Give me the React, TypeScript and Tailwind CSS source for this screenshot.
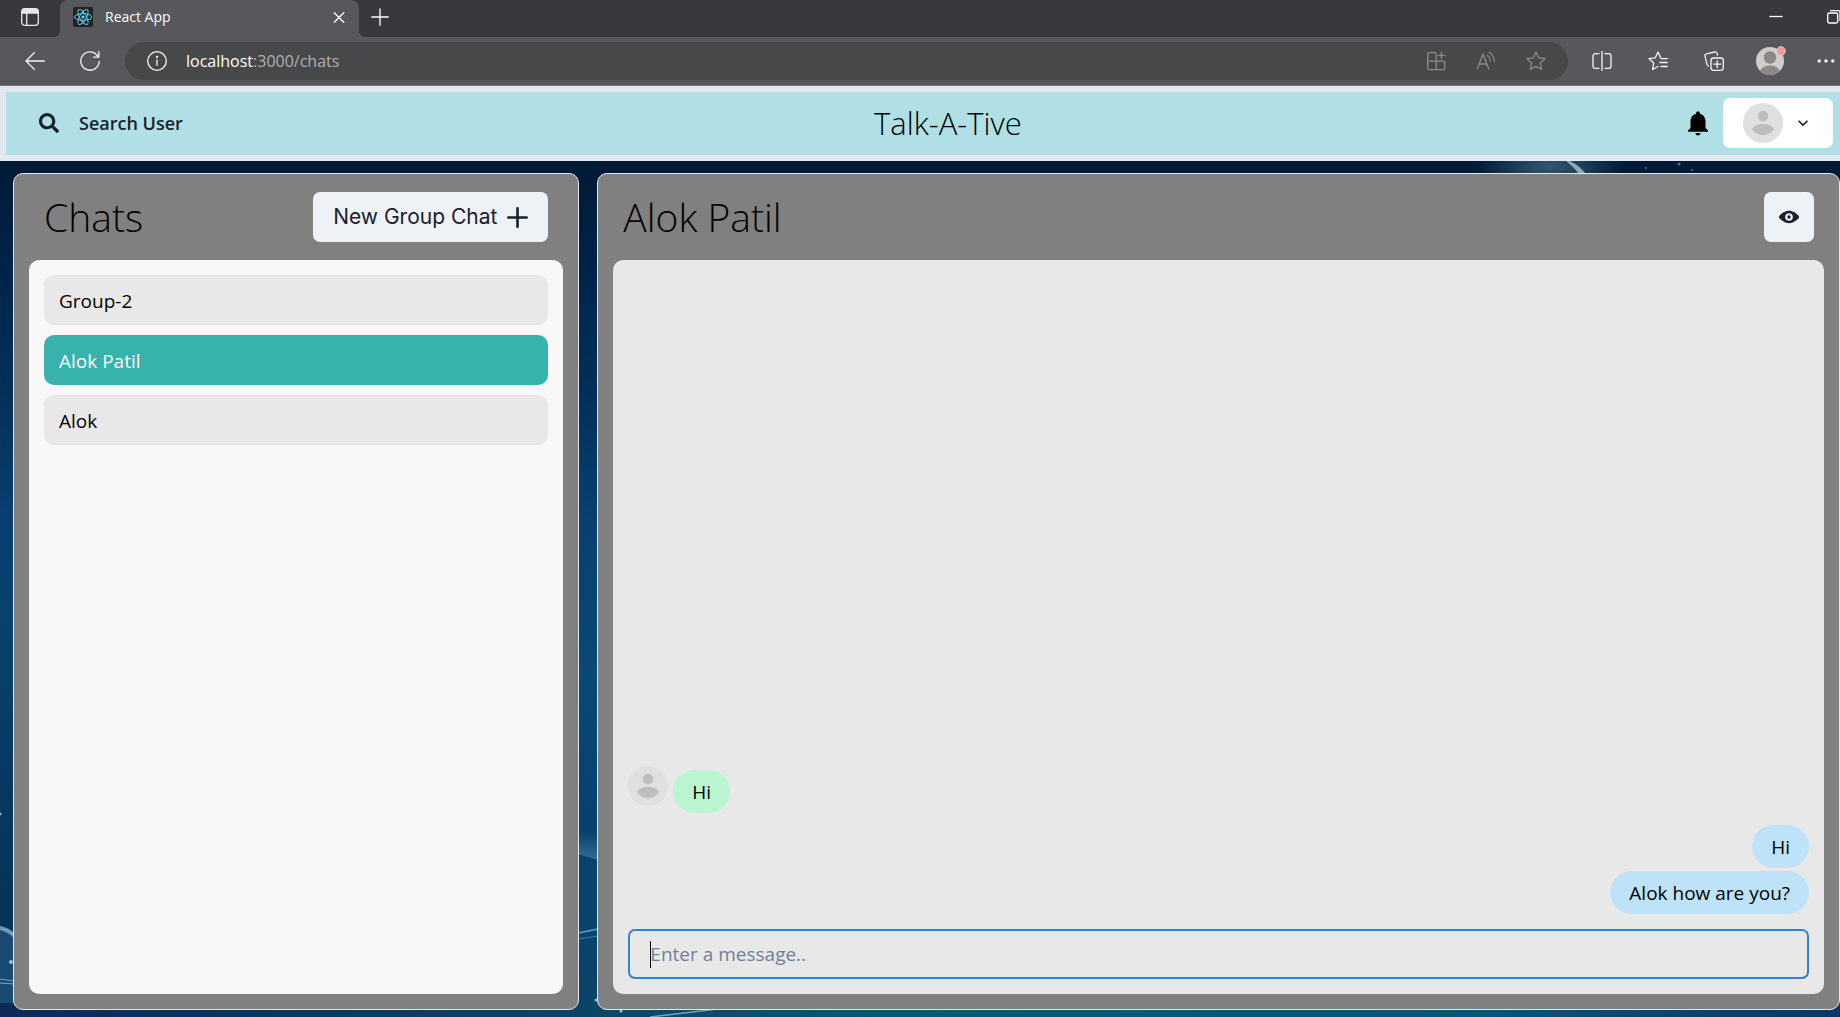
import React from 'react';
import { FaSearch } from 'react-icons/fa';

type Props = { children: React.ReactNode; className?: string; box?: string };

function LineIcon({ children, className = 'size-5', box = '0 0 20 20' }: Props) {
  return (
    <svg
      className={`shrink-0 ${className}`}
      viewBox={box}
      fill="none"
      stroke="currentColor"
      strokeWidth="1.3"
      strokeLinecap="round"
      strokeLinejoin="round"
      aria-hidden="true"
    >
      {children}
    </svg>
  );
}

function Avatar() {
  return (
    <svg className="size-10 shrink-0" viewBox="0 0 40 40" role="img" aria-label="User avatar">
      <circle cx="20" cy="20" r="20" fill="#e0e0e0" />
      <circle cx="20" cy="13" r="5.2" fill="#bdbdbd" />
      <path d="M9 26.3C10.5 22.6 15 21 20 21s9.500 1.600 11 5.300C28.500 30 24.500 32.200 20 32.200S11.500 30 9 26.300z" fill="#bdbdbd" />
    </svg>
  );
}

function ReactLogo() {
  return (
    <svg className="size-5 shrink-0" viewBox="0 0 20 20" aria-hidden="true">
      <rect width="20" height="20" rx="2" fill="#222" />
      <g fill="none" stroke="#61dafb" strokeWidth="0.9">
        <ellipse cx="10" cy="10" rx="8.6" ry="3.3" />
        <ellipse cx="10" cy="10" rx="8.6" ry="3.3" transform="rotate(60 10 10)" />
        <ellipse cx="10" cy="10" rx="8.6" ry="3.3" transform="rotate(120 10 10)" />
      </g>
      <circle cx="10" cy="10" r="1.6" fill="#61dafb" />
    </svg>
  );
}

function TabStrip() {
  return (
    <div className="flex h-[37px] items-stretch overflow-hidden bg-[#38393c] text-white">
      <button aria-label="Tab actions" className="flex w-[60px] shrink-0 items-center pb-[3px] pl-[21px]">
        <LineIcon className="size-[18px] text-gray-200" box="0 0 18 18">
          <rect x="0.7" y="0.7" width="16.6" height="16.6" rx="3" />
          <path d="M1 3.500a2.500 2.500 0 0 1 2.500-2.500h11a2.500 2.500 0 0 1 2.500 2.500V5H1z" fill="currentColor" />
          <path d="M5.700 5v12" />
        </LineIcon>
      </button>
      <div className="relative flex w-[299px] shrink-0 items-center gap-3 rounded-t-lg bg-[#57585c] pr-[14px] pb-[3px] pl-[13px] before:absolute before:bottom-0 before:-left-1.5 before:size-1.5 before:bg-[radial-gradient(circle_at_0_0,transparent_6px,#57585c_6px)] after:absolute after:-right-1.5 after:bottom-0 after:size-1.5 after:bg-[radial-gradient(circle_at_100%_0,transparent_6px,#57585c_6px)]">
        <ReactLogo />
        <span className="flex-1 text-[14px] leading-5">React App</span>
        <button aria-label="Close tab">
          <LineIcon className="size-3" box="0 0 12 12">
            <path d="M1.300 1.800l9.400 9.400M10.700 1.800l-9.400 9.400" />
          </LineIcon>
        </button>
      </div>
      <button aria-label="New tab" className="ml-3 pb-1">
        <LineIcon className="size-[18px]" box="0 0 18 18">
          <path d="M9 .8v16.400M.8 9h16.400" />
        </LineIcon>
      </button>
      <div className="ml-auto flex w-[71px] shrink-0 items-center justify-between pb-1">
        <button aria-label="Minimize">
          <LineIcon className="size-[14px]" box="0 0 14 14">
            <path d="M.5 6.500h13" strokeLinecap="butt" />
          </LineIcon>
        </button>
        <button aria-label="Restore" className="w-[13px] overflow-hidden">
          <LineIcon className="size-[14px]" box="0 0 14 14">
            <rect x="0.700" y="3" width="10" height="10" rx="1.500" />
            <path d="M3.500 .700h7.500a2 2 0 0 1 2 2v8" />
          </LineIcon>
        </button>
      </div>
    </div>
  );
}

function ToolButton({ label, children }: { label: string; children: React.ReactNode }) {
  return (
    <button aria-label={label} className="flex h-[38px] w-14 shrink-0 items-center justify-center">
      {children}
    </button>
  );
}

function Toolbar() {
  return (
    <div className="flex h-[49px] items-center border-b border-[#75767c] bg-[#57585c] text-gray-100">
      <div className="flex w-[125px] shrink-0 items-center gap-[35px] pl-[25px]">
        <button aria-label="Back">
          <LineIcon>
            <path d="M19.300 10H1M9.500 1.500L1 10l8.500 8.500" />
          </LineIcon>
        </button>
        <button aria-label="Reload">
          <LineIcon>
            <path d="M19.200 10.500a9.200 9.200 0 1 1-2.200-6.500l1.800 2M18.900 .8v5.300h-5.300" />
          </LineIcon>
        </button>
      </div>
      <div className="flex h-[38px] flex-1 items-center rounded-full bg-[#474849] pr-[22px] pl-[22px]">
        <LineIcon>
          <circle cx="10" cy="10" r="9.300" />
          <path d="M10 8.800v5.400" />
          <circle cx="10" cy="6" r="0.500" fill="currentColor" />
        </LineIcon>
        <span className="ml-[19px] flex-1 text-[16px] leading-6 text-[#b0b0b2]">
          <span className="text-white">localhost</span>:3000/chats
        </span>
        <div className="flex items-center gap-[30px] text-[#8b8c8e]">
          <button aria-label="Apps available">
            <LineIcon>
              <path d="M10.200 10.200V3.200a1.500 1.500 0 0 0-1.500-1.500H3.200a1.500 1.500 0 0 0-1.500 1.500v14a1.500 1.500 0 0 0 1.500 1.500h14a1.500 1.500 0 0 0 1.500-1.500v-5.500a1.500 1.500 0 0 0-1.500-1.500H1.700M10.200 10.200v8.500M15.500 1.200v6.400M12.300 4.400h6.400" />
            </LineIcon>
          </button>
          <button aria-label="Read aloud">
            <LineIcon>
              <path d="M1.300 18L7 3l5.700 15M3.300 13h7.500M11.500 4.500c1.800 1.300 2.700 3 2.800 5.300M13.200 1.200c3.300 2.200 5 5 5.200 9" />
            </LineIcon>
          </button>
          <button aria-label="Add to favorites">
            <LineIcon>
              <path d="M10 1l2.700 5.800 6.300.8-4.600 4.400 1.200 6.500L10 15.400l-5.600 3.100L5.600 12 1 7.600l6.300-.8z" />
            </LineIcon>
          </button>
        </div>
      </div>
      <div className="flex w-[272px] shrink-0 overflow-hidden pl-1.5">
        <ToolButton label="Split screen">
          <LineIcon>
            <path d="M10 .500v19M7 2.700H3.200A2.200 2.200 0 0 0 1 4.900v10.200a2.200 2.200 0 0 0 2.200 2.200H7M13 2.700h3.800A2.200 2.200 0 0 1 19 4.900v10.200a2.200 2.200 0 0 1-2.200 2.200H13" />
          </LineIcon>
        </ToolButton>
        <ToolButton label="Favorites">
          <LineIcon>
            <path d="M10 15.500l-5.500 3L5.700 12 .9 7.600l6.400-.8L10 1l2.700 5.800M13 7.600h6.300M12 11.500h7.300M13 15.500h6.300" />
          </LineIcon>
        </ToolButton>
        <ToolButton label="Collections">
          <LineIcon>
            <rect x="7" y="7" width="12.300" height="12.300" rx="2.500" />
            <path d="M13.200 9.800v6.800M9.800 13.200h6.800M13.500 4l-.3-1.200A2 2 0 0 0 10.700 1L2.500 2.800A2 2 0 0 0 1 5.200l2 8.200c.2.900.8 1.500 1.500 1.700" />
          </LineIcon>
        </ToolButton>
        <ToolButton label="Profile">
          <svg className="size-8" viewBox="0 0 32 32" aria-hidden="true">
            <clipPath id="profile-clip">
              <circle cx="16" cy="16" r="14" />
            </clipPath>
            <circle cx="16" cy="16" r="14" fill="#cfcdca" />
            <g fill="#8b8784" clipPath="url(#profile-clip)">
              <circle cx="16" cy="12.500" r="6.200" />
              <ellipse cx="16" cy="28" rx="10.500" ry="7.500" />
            </g>
            <circle cx="27" cy="6" r="4.400" fill="#fa9a94" stroke="#d9d3d2" strokeWidth="0.800" />
          </svg>
        </ToolButton>
        <ToolButton label="Settings and more">
          <LineIcon>
            <g fill="currentColor" stroke="none">
              <circle cx="3.200" cy="10" r="1.700" />
              <circle cx="10" cy="10" r="1.700" />
              <circle cx="16.800" cy="10" r="1.700" />
            </g>
          </LineIcon>
        </ToolButton>
      </div>
    </div>
  );
}

function Header() {
  return (
    <header className="flex shrink-0 items-center justify-between border-y-6 border-l-6 border-[#e2e8f0] bg-[#b0e0e6] pt-1.5 pr-[7px] pb-[7px] pl-[13px]">
      <button className="flex h-[50px] items-center gap-5 px-5 text-[18px] font-semibold text-[#1a202c]">
        <FaSearch className="size-5" />
        <span className="pr-5">Search User</span>
      </button>
      <h1 className="text-[31px] leading-[50px] font-light">Talk-A-Tive</h1>
      <div className="flex items-center gap-2.5 pl-2.5">
        <button aria-label="Notifications">
          <svg className="size-[30px]" viewBox="0 0 24 24" fill="#000" aria-hidden="true">
            <path d="M12 22c1.100 0 2-.9 2-2h-4c0 1.100.89 2 2 2zm6-6v-5c0-3.070-1.640-5.640-4.500-6.320V4c0-.83-.67-1.500-1.500-1.500s-1.500.67-1.500 1.500v.68C7.630 5.360 6 7.920 6 11v5l-2 2v1h16v-1l-2-2z" />
          </svg>
        </button>
        <button aria-label="Account menu" className="flex h-[50px] items-center gap-2.5 rounded-[7px] bg-white px-5 text-[#1a202c]">
          <Avatar />
          <svg className="size-5" viewBox="0 0 24 24" fill="currentColor" aria-hidden="true">
            <path d="M16.590 8.590L12 13.170 7.410 8.590 6 10l6 6 6-6z" />
          </svg>
        </button>
      </div>
    </header>
  );
}

function SpaceBackdrop() {
  return (
    <svg className="absolute inset-0 size-full" viewBox="0 0 1840 856" preserveAspectRatio="none" aria-hidden="true">
      <defs>
        <linearGradient id="sky" x1="0" y1="0" x2="0" y2="1">
          <stop offset="0" stopColor="#001a35" />
          <stop offset="0.120" stopColor="#002347" />
          <stop offset="0.280" stopColor="#03315a" />
          <stop offset="0.420" stopColor="#084070" />
          <stop offset="0.600" stopColor="#094a74" />
          <stop offset="0.760" stopColor="#07426f" />
          <stop offset="1" stopColor="#0a4566" />
        </linearGradient>
        <linearGradient id="edge" x1="0" y1="0" x2="0" y2="1">
          <stop offset="0" stopColor="#04335f" stopOpacity="0" />
          <stop offset="1" stopColor="#063354" />
        </linearGradient>
        <linearGradient id="floor" x1="0" y1="0" x2="1" y2="0">
          <stop offset="0" stopColor="#0c2a55" />
          <stop offset="0.320" stopColor="#0a4565" />
          <stop offset="0.520" stopColor="#0b5a72" />
          <stop offset="0.800" stopColor="#0a5575" />
          <stop offset="1" stopColor="#073766" />
        </linearGradient>
        <linearGradient id="haze" x1="0" y1="0" x2="0" y2="1">
          <stop offset="0" stopColor="#5b93b5" stopOpacity="0" />
          <stop offset="1" stopColor="#5b93b5" stopOpacity="0.550" />
        </linearGradient>
        <radialGradient id="glow">
          <stop offset="0" stopColor="#4d7894" stopOpacity="0.650" />
          <stop offset="1" stopColor="#4d7894" stopOpacity="0" />
        </radialGradient>
      </defs>
      <rect width="1840" height="856" fill="url(#sky)" />
      <rect y="350" width="14" height="420" fill="url(#edge)" />
      <rect y="842" width="1840" height="14" fill="url(#floor)" />
      <ellipse cx="1550" cy="6" rx="75" ry="30" fill="url(#glow)" />
      <path d="M1570 0q10 5 16 13h-7q-5-7-13-13z" fill="#8ba8ba" />
      <g fill="#4a7194">
        <circle cx="1646" cy="7" r="1" />
        <circle cx="1679" cy="3" r="1.500" />
        <circle cx="1692" cy="9" r="1" />
      </g>
      <path d="M0 765q9 1 14 6v71H0z" fill="#1b4a70" />
      <path d="M0 765q9 2 14 7v5q-6-6-14-8z" fill="#6f9cba" />
      <path d="M0 818l14 2M0 822l14 1" stroke="#7ba4c2" />
      <circle cx="11" cy="801" r="2" fill="#8fbcd6" />
      <circle cx="0" cy="653" r="1.500" fill="#8fbcd6" />
      <path d="M578 672h20v27l-20-6z" fill="url(#haze)" />
      <path d="M578 772l20-4" stroke="#5ba0c8" strokeWidth="1.500" />
      <path d="M578 778l20-3" stroke="#3d80a8" />
      <circle cx="596" cy="839" r="1.500" fill="#7fc4d4" />
      <circle cx="621" cy="850" r="1.500" fill="#8edcea" />
      <path d="M650 856q35-4 75-9" fill="none" stroke="#6ba5bd" strokeWidth="1.500" />
    </svg>
  );
}

const chats = ['Group-2', 'Alok Patil', 'Alok'];
const selectedChat = 'Alok Patil';

function ChatList() {
  return (
    <aside className="flex w-[31%] shrink-0 flex-col rounded-[10px] border border-[#e2e8f0] bg-[#808080] p-[15px]">
      <div className="mb-[15px] flex h-14 items-center justify-between px-[15px]">
        <h2 className="text-[39px] leading-[56px] font-light">Chats</h2>
        <button className="flex h-[50px] items-center gap-2.5 rounded-[7px] bg-[#edf2f7] px-5 text-[#1a202c]">
          <span className="font-['Inter'] text-[21px] leading-6">New Group Chat</span>
          <svg className="size-[21px]" viewBox="0 0 24 24" stroke="currentColor" strokeWidth="3" strokeLinecap="round" aria-hidden="true">
            <path d="M12 1.500v21M1.500 12h21" />
          </svg>
        </button>
      </div>
      <ul className="flex flex-1 flex-col gap-2.5 rounded-[10px] bg-[#f8f8f8] p-[15px]">
        {chats.map((name) => (
          <li key={name}>
            <button
              className={`h-[50px] w-full rounded-[10px] px-[15px] pt-0.5 text-left ${
                name === selectedChat ? 'bg-[#38b2ac] text-white' : 'bg-[#e8e8e8] text-black'
              }`}
            >
              {name}
            </button>
          </li>
        ))}
      </ul>
    </aside>
  );
}

function Conversation() {
  return (
    <section className="flex flex-1 flex-col rounded-[10px] border border-[#e2e8f0] bg-[#808080] p-[15px]">
      <div className="mb-[15px] flex h-14 items-center justify-between px-2.5">
        <h2 className="text-[39px] leading-[56px] font-light">Alok Patil</h2>
        <button aria-label="View profile" className="flex size-[50px] items-center justify-center rounded-[7px] bg-[#edf2f7] text-[#1a202c]">
          <svg className="size-5" viewBox="0 0 24 24" fill="currentColor" aria-hidden="true">
            <path d="M23.432,10.524C20.787,7.614,16.400,4.538,12,4.600,7.600,4.537,3.213,7.615.568,10.524a2.211,2.211,0,0,0,0,2.948C3.182,16.351,7.507,19.400,11.839,19.400h.308c4.347,0,8.671-3.049,11.288-5.929A2.210,2.210,0,0,0,23.432,10.524ZM7.400,12A4.600,4.600,0,1,1,12,16.600,4.600,4.600,0,0,1,7.400,12Z" />
            <circle cx="12" cy="12" r="2" />
          </svg>
        </button>
      </div>
      <div className="flex flex-1 flex-col justify-end rounded-[10px] bg-[#e8e8e8] p-[15px]">
        <div className="flex gap-[5px]">
          <Avatar />
          <p className="mt-1 rounded-full bg-[#b9f5d0] px-[19px] pt-[7px] pb-[5px] leading-[31px]">Hi</p>
        </div>
        <div className="mt-3 mb-[15px] flex flex-col items-end gap-[3px]">
          <p className="rounded-full bg-[#bee3f8] px-[19px] pt-[7px] pb-[5px] leading-[31px]">Hi</p>
          <p className="rounded-full bg-[#bee3f8] px-[19px] pt-[7px] pb-[5px] leading-[31px]">Alok how are you?</p>
        </div>
        <div className="relative flex items-center">
          <input
            aria-label="Message"
            placeholder="Enter a message.."
            className="h-[50px] w-full rounded-[7px] border-2 border-[#3182ce] bg-[#e8e8e8] pl-5 outline-none placeholder:text-[#718096]"
          />
          <span className="absolute left-[22px] h-[27px] w-px bg-black" />
        </div>
      </div>
    </section>
  );
}

export default function App() {
  return (
    <div className="flex min-h-screen flex-col overflow-hidden bg-[#001a35] font-['Open_Sans',sans-serif] text-[19px] text-black">
      <div className="shrink-0">
        <TabStrip />
        <Toolbar />
      </div>
      <Header />
      <main className="relative flex flex-1 flex-col">
        <SpaceBackdrop />
        <div className="relative flex flex-1 gap-[18px] pt-3 pb-[7px] pl-[13px]">
          <ChatList />
          <Conversation />
        </div>
      </main>
    </div>
  );
}
